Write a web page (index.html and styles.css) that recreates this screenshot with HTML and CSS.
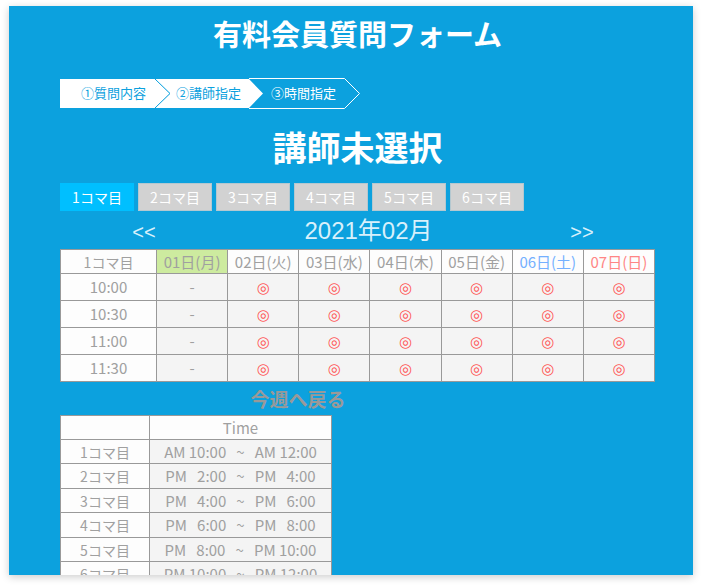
FILE: index.html
```html
<!DOCTYPE html>
<html lang="ja">
<head>
<meta charset="utf-8">
<meta name="viewport" content="width=device-width, initial-scale=1">
<title>有料会員質問フォーム</title>
<link rel="stylesheet" href="styles.css">
</head>
<body>
<main class="card">
  <h1 class="title">有料会員質問フォーム</h1>

  <ol class="steps">
    <li class="step"><svg class="step-shape" viewBox="0 0 112 30" width="112" height="30" aria-hidden="true"><path d="M0 0H95L110 14.5L95 29H0Z" fill="#fff"/></svg><span>①質問内容</span></li>
    <li class="step"><svg class="step-shape" viewBox="0 0 112 30" width="112" height="30" aria-hidden="true"><path d="M0 0H94L108 14.500L94 29H0L15 14.500Z" fill="#fff"/><path d="M0 0L15 14.500L0 29" fill="none" stroke="#0ca1de"/></svg><span>②講師指定</span></li>
    <li class="step step-current"><svg class="step-shape" viewBox="0 0 112 30" width="112" height="30" aria-hidden="true"><path d="M-1 -0.500H94.500L109.500 14.500L94.500 29.500H-1" fill="none" stroke="#fff"/></svg><span>③時間指定</span></li>
  </ol>

  <h2 class="teacher">講師未選択</h2>

  <div class="tabs">
    <button type="button" class="tab tab-active">1コマ目</button>
    <button type="button" class="tab">2コマ目</button>
    <button type="button" class="tab">3コマ目</button>
    <button type="button" class="tab">4コマ目</button>
    <button type="button" class="tab">5コマ目</button>
    <button type="button" class="tab">6コマ目</button>
  </div>

  <div class="month-nav">
    <a class="arrow" href="#">&lt;&lt;</a>
    <span class="month">2021年02月</span>
    <a class="arrow" href="#">&gt;&gt;</a>
  </div>

  <table class="grid calendar">
    <thead>
      <tr><th class="slot">1コマ目</th><th class="today">01日(月)</th><th>02日(火)</th><th>03日(水)</th><th>04日(木)</th><th>05日(金)</th><th class="sat">06日(土)</th><th class="sun">07日(日)</th></tr>
    </thead>
    <tbody>
      <tr><th>10:00</th><td>-</td><td><a href="#">◎</a></td><td><a href="#">◎</a></td><td><a href="#">◎</a></td><td><a href="#">◎</a></td><td><a href="#">◎</a></td><td><a href="#">◎</a></td></tr>
      <tr><th>10:30</th><td>-</td><td><a href="#">◎</a></td><td><a href="#">◎</a></td><td><a href="#">◎</a></td><td><a href="#">◎</a></td><td><a href="#">◎</a></td><td><a href="#">◎</a></td></tr>
      <tr><th>11:00</th><td>-</td><td><a href="#">◎</a></td><td><a href="#">◎</a></td><td><a href="#">◎</a></td><td><a href="#">◎</a></td><td><a href="#">◎</a></td><td><a href="#">◎</a></td></tr>
      <tr><th>11:30</th><td>-</td><td><a href="#">◎</a></td><td><a href="#">◎</a></td><td><a href="#">◎</a></td><td><a href="#">◎</a></td><td><a href="#">◎</a></td><td><a href="#">◎</a></td></tr>
    </tbody>
  </table>

  <a class="this-week" href="#">今週へ戻る</a>

  <table class="grid times">
    <thead>
      <tr><th class="slot-name"></th><th class="time-head">Time</th></tr>
    </thead>
    <tbody>
      <tr><th>1コマ目</th><td>AM 10:00   ~   AM 12:00</td></tr>
      <tr><th>2コマ目</th><td>PM   2:00   ~   PM   4:00</td></tr>
      <tr><th>3コマ目</th><td>PM   4:00   ~   PM   6:00</td></tr>
      <tr><th>4コマ目</th><td>PM   6:00   ~   PM   8:00</td></tr>
      <tr><th>5コマ目</th><td>PM   8:00   ~   PM 10:00</td></tr>
      <tr><th>6コマ目</th><td>PM 10:00   ~   PM 12:00</td></tr>
    </tbody>
  </table>
</main>
</body>
</html>
```
FILE: styles.css
```css
* {
  box-sizing: border-box;
}

body {
  margin: 0;
  padding: 6px 9px 12px;
  height: 100vh;
  background: #fff;
  font-family: "Noto Sans CJK JP", sans-serif;
  font-size: 15px;
  color: #a0a0a0;
}

a {
  color: inherit;
  text-decoration: none;
}

.card {
  height: 100%;
  overflow: hidden;
  padding: 8px 38px 0 51px;
  background: #0ca1de;
  box-shadow: 0 2px 8px rgba(0, 0, 0, 0.2);
}

.title {
  margin: 0 0 27px;
  font-size: 29px;
  font-weight: 700;
  line-height: 38px;
  text-align: center;
  color: #fff;
}

.steps {
  display: flex;
  margin: 0 0 18px;
  padding: 0;
  height: 29px;
  list-style: none;
}

.step {
  position: relative;
  width: 95px;
  padding-left: 21px;
  font-size: 13px;
  line-height: 27px;
  white-space: nowrap;
  color: #0ca1de;
}

.step span {
  position: relative;
}

.step-current {
  color: #fff;
}

.step-shape {
  position: absolute;
  top: 0;
  left: 0;
  overflow: visible;
}

.teacher {
  margin: 0 0 15px;
  font-size: 34px;
  font-weight: 700;
  line-height: 42px;
  text-align: center;
  color: #fff;
}

.tabs {
  display: flex;
  gap: 4px;
}

.tab {
  width: 74px;
  height: 28px;
  padding: 0;
  border: 1px solid #b4c8d0;
  background: #d2d2d2;
  font: inherit;
  font-size: 14px;
  line-height: 26px;
  color: #fff;
}

.tab-active {
  border-color: #00bfff;
  background: #00bfff;
}

.month-nav {
  display: grid;
  grid-template-columns: 168fr 281fr 146fr;
  align-items: center;
  height: 38px;
  font-family: "Liberation Sans", "Noto Sans CJK JP", sans-serif;
  line-height: 38px;
  text-align: center;
  color: #d8f0fb;
}

.month {
  font-size: 24px;
}

.arrow {
  padding-top: 2px;
  font-size: 20px;
}

.grid {
  border-collapse: collapse;
  table-layout: fixed;
  line-height: 20px;
  text-align: center;
}

.grid th,
.grid td {
  padding: 0;
  border: 1px solid #999;
  font-weight: 400;
  white-space: pre;
}

.grid th {
  background: #fdfdfd;
}

.grid td {
  background: #f4f4f4;
}

.calendar {
  width: 100%;
}

.calendar thead tr {
  height: 24px;
}

.calendar tbody tr {
  height: 27px;
}

.calendar .slot {
  width: 96px;
  font-size: 14px;
}

.calendar .today {
  background: #cdeb9f;
}

.calendar .sat {
  color: #74b0ff;
}

.calendar .sun {
  color: #ff8585;
}

.calendar td a {
  font-family: "DejaVu Sans", sans-serif;
  color: #f55;
}

.this-week {
  display: block;
  width: fit-content;
  margin-left: 32%;
  font-size: 19px;
  font-weight: 700;
  line-height: 33px;
  color: #999;
}

.times {
  width: 272px;
}

.times tr {
  height: 24px;
}

.times tbody tr:nth-child(even) {
  height: 25px;
}

.times th {
  font-size: 14px;
}

.times .slot-name {
  width: 89px;
}

.times .time-head {
  font-size: 15px;
}
```
